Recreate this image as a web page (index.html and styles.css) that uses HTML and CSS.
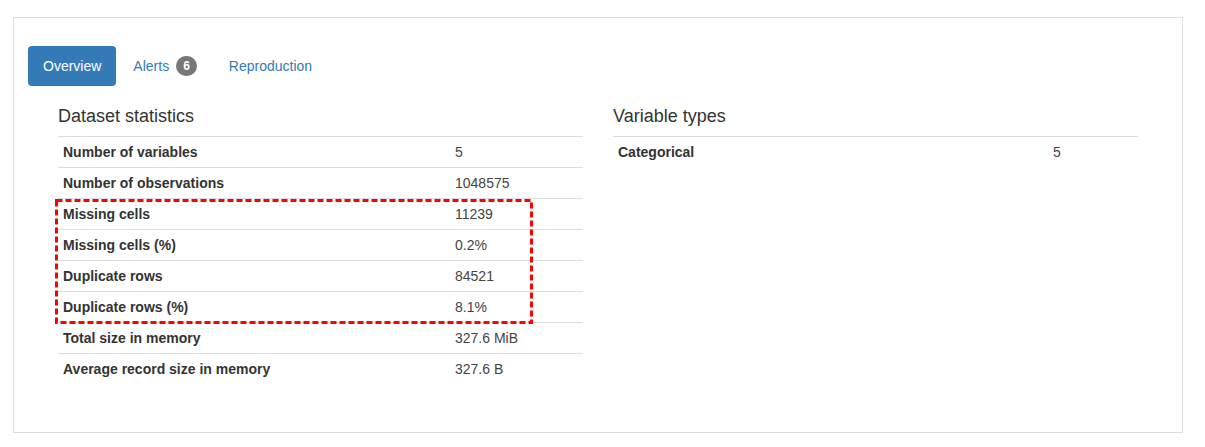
FILE: index.html
```html
<!DOCTYPE html>
<html>
<head>
<meta charset="utf-8">
<link rel="stylesheet" href="styles.css">
</head>
<body>
<div class="panel">
  <ul class="pills">
    <li class="pill active">Overview</li>
    <li class="pill">Alerts<span class="badge">6</span></li>
    <li class="pill">Reproduction</li>
  </ul>
  <div class="content">
    <div class="col">
      <h4 class="title">Dataset statistics</h4>
      <div class="table-wrap">
        <table class="stats">
          <colgroup><col class="lab-left"><col></colgroup>
          <tr><th>Number of variables</th><td>5</td></tr>
          <tr><th>Number of observations</th><td>1048575</td></tr>
          <tr><th>Missing cells</th><td>11239</td></tr>
          <tr><th>Missing cells (%)</th><td>0.2%</td></tr>
          <tr><th>Duplicate rows</th><td>84521</td></tr>
          <tr><th>Duplicate rows (%)</th><td>8.1%</td></tr>
          <tr><th>Total size in memory</th><td>327.6 MiB</td></tr>
          <tr><th>Average record size in memory</th><td>327.6 B</td></tr>
        </table>
        <svg class="highlight" width="478" height="125" viewBox="0 0 478 125">
          <rect x="1.5" y="1.5" width="475" height="122" fill="none" stroke="#ff0000" stroke-width="3" stroke-dasharray="6 3"/>
        </svg>
      </div>
    </div>
    <div class="col">
      <h4 class="title">Variable types</h4>
      <table class="stats">
        <colgroup><col class="lab-right"><col></colgroup>
        <tr><th>Categorical</th><td>5</td></tr>
      </table>
    </div>
  </div>
</div>
</body>
</html>
```

FILE: styles.css
```css
html, body {
  margin: 0;
  padding: 0;
  background: #ffffff;
}

body {
  font-family: "Liberation Sans", Arial, Helvetica, sans-serif;
  font-size: 14px;
  line-height: 20px;
  color: #333333;
}

.panel {
  box-sizing: border-box;
  width: 1170px;
  height: 416px;
  margin: 17px 0 0 13px;
  border: 1px solid #dddddd;
  padding: 28px 14px 0 14px;
}

.pills {
  list-style: none;
  margin: 0;
  padding: 0;
  display: flex;
  gap: 2px;
}

.pill {
  padding: 10px 15px;
  line-height: 20px;
  border-radius: 4px;
  color: #337ab7;
  display: flex;
  align-items: center;
}

.pill.active {
  background: #337ab7;
  color: #ffffff;
}

.badge {
  display: inline-block;
  margin-left: 7px;
  min-width: 6px;
  padding: 3px 7px;
  font-size: 12px;
  font-weight: bold;
  line-height: 14px;
  color: #ffffff;
  background: #777777;
  border-radius: 10px;
  text-align: center;
}

.content {
  display: grid;
  grid-template-columns: 525px 525px;
  column-gap: 30px;
  padding-left: 30px;
}

.title {
  margin: 20px 0 10px 0;
  font-size: 18px;
  font-weight: normal;
  line-height: 20px;
  color: #333333;
}

.table-wrap {
  position: relative;
}

.stats {
  width: 100%;
  border-collapse: collapse;
  table-layout: fixed;
}

.lab-left {
  width: 392px;
}

.lab-right {
  width: 435px;
}

.stats th,
.stats td {
  padding: 5px;
  line-height: 20px;
  border-top: 1px solid #dddddd;
  text-align: left;
  vertical-align: top;
}

.stats th {
  font-weight: bold;
  color: #333333;
}

.stats td {
  color: #444444;
}

.highlight {
  position: absolute;
  left: -3px;
  top: 63px;
}
```
